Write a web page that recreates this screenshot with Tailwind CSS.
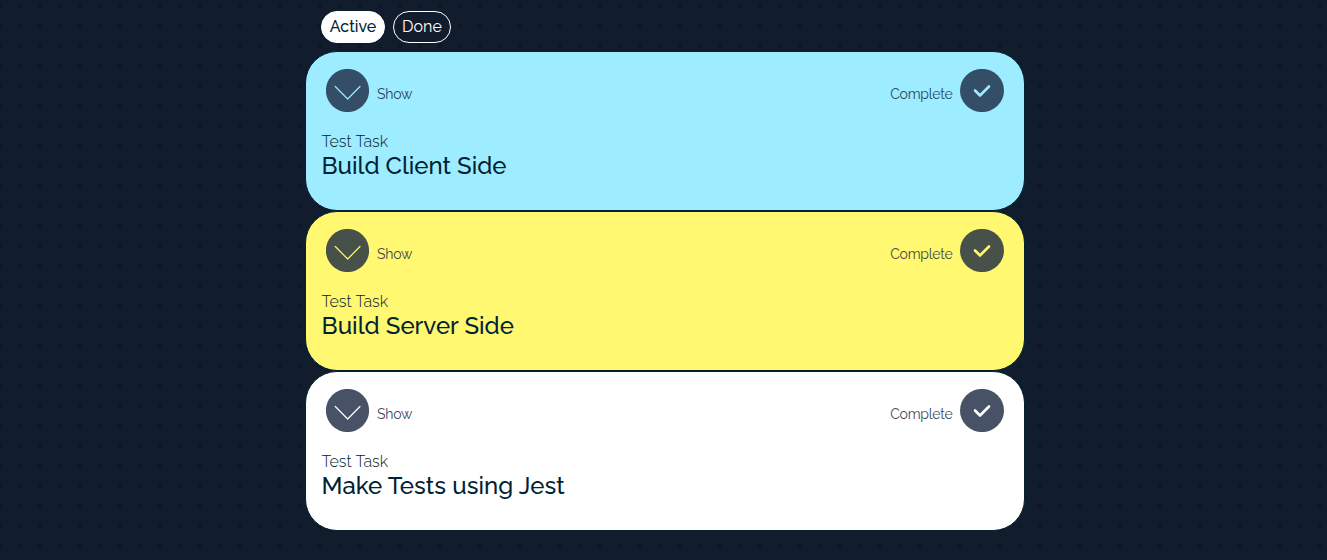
<!DOCTYPE html>
<html lang="en">
<head>
<meta charset="utf-8">
<title>Tasks</title>
<script src="https://cdn.jsdelivr.net/npm/@tailwindcss/browser@4"></script>
</head>
<body class="h-[560px] overflow-hidden bg-[#111c2d] bg-[radial-gradient(circle_at_10px_10px,transparent_1px,#071522cc_1.5px,#071522cc_2px,transparent_2.5px)] bg-[length:20px_20px] bg-[position:10px_-4px] font-['Raleway','Lato',sans-serif] text-[#002233]">
<main class="ml-[305px] w-[720px] pt-[11px]">
  <nav class="mb-2 ml-4 flex h-8 gap-2 text-base">
    <button class="flex w-16 items-center justify-center whitespace-nowrap rounded-full border border-white bg-white font-medium">Active</button>
    <button class="flex w-[58px] items-center justify-center whitespace-nowrap rounded-full border border-white text-white"><span class="tracking-[0.1px]">Done</span></button>
  </nav>

  <article class="h-40 rounded-[32px] border border-[#002233] bg-[#9eecff] px-[15.5px] pt-[17px]">
    <div class="flex h-[43px] items-center justify-between px-[4.5px] text-[#9eecff]">
      <div class="flex items-center gap-2">
        <svg class="h-[43px] w-[43px]" viewBox="0 0 43 43" fill="none"><circle cx="21.5" cy="21.5" r="21.6" fill="#334e66"/><path d="M9.3 17.5 21.7 30 34 17.5" stroke="currentColor" stroke-width="1.2" stroke-linecap="round" stroke-linejoin="round"/></svg>
        <span class="mt-[7px] text-sm tracking-[-0.23px] text-[#2b4760]">Show</span>
      </div>
      <div class="flex items-center gap-[7.5px]">
        <span class="mt-[7px] text-sm tracking-[-0.23px] text-[#2b4760]">Complete</span>
        <svg class="h-[43px] w-11" viewBox="0 0 44 43" fill="none"><ellipse cx="22" cy="21.5" rx="22" ry="21.6" fill="#334e66"/><path d="m15 21.5 5 5 9-9" stroke="currentColor" stroke-width="2.6" stroke-linecap="round" stroke-linejoin="round"/></svg>
      </div>
    </div>
    <p class="mt-[18px] text-base leading-6 font-light"><span class="tracking-[0.05px]">Test Task</span></p>
    <h2 class="text-2xl leading-6 font-medium">Build Client Side</h2>
  </article>

  <article class="h-40 rounded-[32px] border border-[#002233] bg-[#fff870] px-[15.5px] pt-[17px]">
    <div class="flex h-[43px] items-center justify-between px-[4.5px] text-[#fff870]">
      <div class="flex items-center gap-2">
        <svg class="h-[43px] w-[43px]" viewBox="0 0 43 43" fill="none"><circle cx="21.5" cy="21.5" r="21.6" fill="#475149"/><path d="M9.3 17.5 21.7 30 34 17.5" stroke="currentColor" stroke-width="1.2" stroke-linecap="round" stroke-linejoin="round"/></svg>
        <span class="mt-[7px] text-sm tracking-[-0.23px] text-[#404b45]">Show</span>
      </div>
      <div class="flex items-center gap-[7.5px]">
        <span class="mt-[7px] text-sm tracking-[-0.23px] text-[#404b45]">Complete</span>
        <svg class="h-[43px] w-11" viewBox="0 0 44 43" fill="none"><ellipse cx="22" cy="21.5" rx="22" ry="21.6" fill="#475149"/><path d="m15 21.5 5 5 9-9" stroke="currentColor" stroke-width="2.6" stroke-linecap="round" stroke-linejoin="round"/></svg>
      </div>
    </div>
    <p class="mt-[18px] text-base leading-6 font-light"><span class="tracking-[0.05px]">Test Task</span></p>
    <h2 class="text-2xl leading-6 font-medium"><span class="tracking-[0.03px]">Build Server Side</span></h2>
  </article>

  <article class="h-40 rounded-[32px] border border-[#002233] bg-white px-[15.5px] pt-[17px]">
    <div class="flex h-[43px] items-center justify-between px-[4.5px] text-white">
      <div class="flex items-center gap-2">
        <svg class="h-[43px] w-[43px]" viewBox="0 0 43 43" fill="none"><circle cx="21.5" cy="21.5" r="21.6" fill="#475266"/><path d="M9.3 17.5 21.7 30 34 17.5" stroke="currentColor" stroke-width="1.2" stroke-linecap="round" stroke-linejoin="round"/></svg>
        <span class="mt-[7px] text-sm tracking-[-0.23px] text-[#404c60]">Show</span>
      </div>
      <div class="flex items-center gap-[7.5px]">
        <span class="mt-[7px] text-sm tracking-[-0.23px] text-[#404c60]">Complete</span>
        <svg class="h-[43px] w-11" viewBox="0 0 44 43" fill="none"><ellipse cx="22" cy="21.5" rx="22" ry="21.6" fill="#475266"/><path d="m15 21.5 5 5 9-9" stroke="currentColor" stroke-width="2.6" stroke-linecap="round" stroke-linejoin="round"/></svg>
      </div>
    </div>
    <p class="mt-[18px] text-base leading-6 font-light"><span class="tracking-[0.05px]">Test Task</span></p>
    <h2 class="text-2xl leading-6 font-medium"><span class="tracking-[0.05px]">Make Tests using Jest</span></h2>
  </article>
</main>
</body>
</html>
